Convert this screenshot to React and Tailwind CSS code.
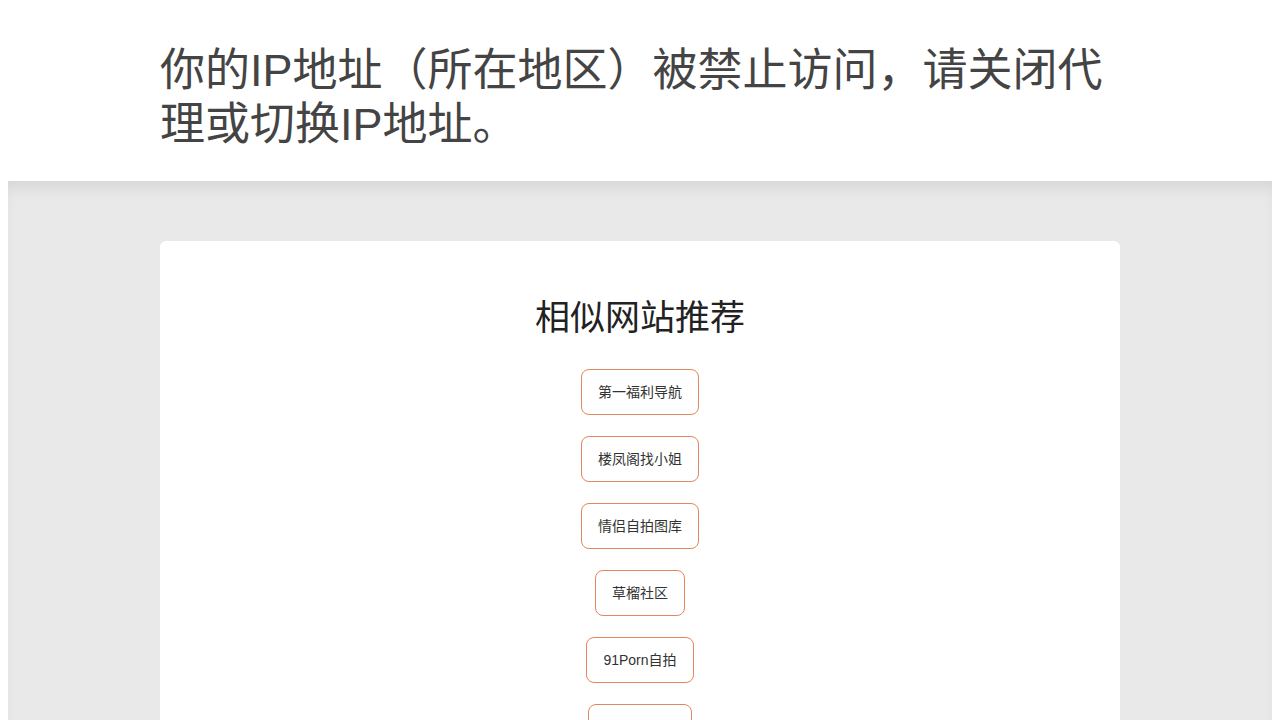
const sites = ["第一福利导航", "楼凤阁找小姐", "情侣自拍图库", "草榴社区", "91Porn自拍", "免费影视站"];

export default function App() {
  return (
    <div
      className="min-h-screen bg-white px-2 text-[#444]"
      style={{ fontFamily: '"Liberation Sans", "Noto Sans CJK SC", sans-serif' }}
    >
      <header className="bg-white pt-[44px] pb-[29px]">
        <h1 className="mx-auto w-[960px] text-[45px] leading-[54px] font-normal text-[#444]">
          你的IP地址（所在地区）被禁止访问，请关闭代理或切换IP地址。
        </h1>
      </header>

      <main className="bg-[#e9e9e9] pt-[60px] pb-10 shadow-[inset_0_12px_18px_-8px_rgba(0,0,0,0.1)]">
        <section className="mx-auto w-[960px] rounded-md bg-white pt-[55px] pb-10">
          <h2 className="text-center text-[35px] leading-[44px] text-[#222]">相似网站推荐</h2>
          <div className="mt-[29px] flex flex-col items-center gap-[21px]">
            {sites.map((site) => (
              <a
                key={site}
                href="#"
                className="rounded-lg border border-[#e3875c] px-4 py-[13px] text-sm leading-[18px] text-[#333]"
              >
                {site}
              </a>
            ))}
          </div>
        </section>
      </main>
    </div>
  );
}
